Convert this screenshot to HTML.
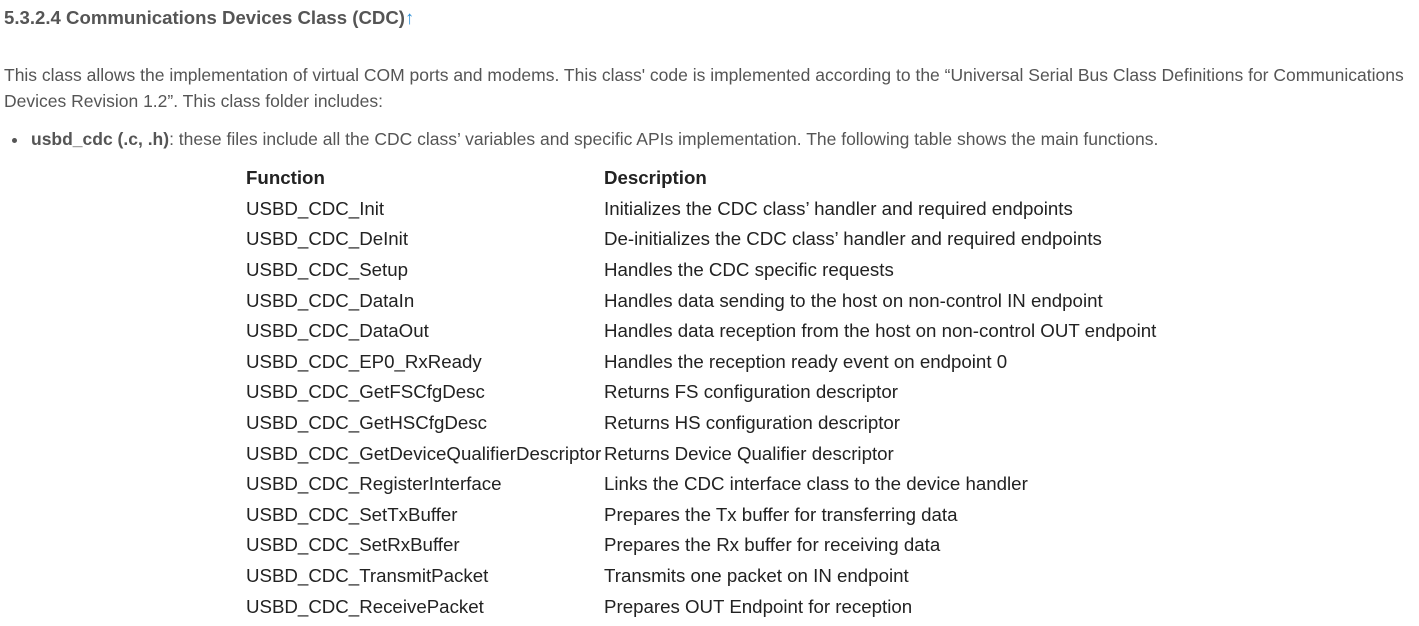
<!DOCTYPE html>
<html><head><style>
body{margin:0;background:#fff;font-family:"Liberation Sans",sans-serif;color:#555;}
h4{position:absolute;left:4px;top:7px;margin:0;font-size:18.6px;font-weight:bold;color:#555;}
h4 span{color:#2d8fd5;font-weight:bold}
.p{position:absolute;left:4px;top:62px;width:1405px;font-size:17.5px;line-height:26px;margin:0}
.li{position:absolute;left:31px;top:128px;font-size:17.5px;line-height:22px}
.li:before{content:"";position:absolute;left:-19px;top:10px;width:5px;height:5px;border-radius:50%;background:#555}
.li b{color:#555}
table{position:absolute;left:244px;top:163px;border-collapse:collapse;font-size:18.7px;color:#222}
td,th{padding:0 2px;height:30.6px;text-align:left;white-space:nowrap;vertical-align:middle}
th{font-weight:bold}
td:first-child,th:first-child{width:356px;padding-right:0}
</style></head><body>
<h4>5.3.2.4 Communications Devices Class (CDC)<span>↑</span></h4>
<p class="p">This class allows the implementation of virtual COM ports and modems. This class' code is implemented according to the “Universal Serial Bus Class Definitions for Communications Devices Revision 1.2”. This class folder includes:</p>
<div class="li"><b>usbd_cdc (.c, .h)</b>: these files include all the CDC class’ variables and specific APIs implementation. The following table shows the main functions.</div>
<table>
<tr><th>Function</th><th>Description</th></tr>
<tr><td>USBD_CDC_Init</td><td>Initializes the CDC class’ handler and required endpoints</td></tr>
<tr><td>USBD_CDC_DeInit</td><td>De-initializes the CDC class’ handler and required endpoints</td></tr>
<tr><td>USBD_CDC_Setup</td><td>Handles the CDC specific requests</td></tr>
<tr><td>USBD_CDC_DataIn</td><td>Handles data sending to the host on non-control IN endpoint</td></tr>
<tr><td>USBD_CDC_DataOut</td><td>Handles data reception from the host on non-control OUT endpoint</td></tr>
<tr><td>USBD_CDC_EP0_RxReady</td><td>Handles the reception ready event on endpoint 0</td></tr>
<tr><td>USBD_CDC_GetFSCfgDesc</td><td>Returns FS configuration descriptor</td></tr>
<tr><td>USBD_CDC_GetHSCfgDesc</td><td>Returns HS configuration descriptor</td></tr>
<tr><td>USBD_CDC_GetDeviceQualifierDescriptor</td><td>Returns Device Qualifier descriptor</td></tr>
<tr><td>USBD_CDC_RegisterInterface</td><td>Links the CDC interface class to the device handler</td></tr>
<tr><td>USBD_CDC_SetTxBuffer</td><td>Prepares the Tx buffer for transferring data</td></tr>
<tr><td>USBD_CDC_SetRxBuffer</td><td>Prepares the Rx buffer for receiving data</td></tr>
<tr><td>USBD_CDC_TransmitPacket</td><td>Transmits one packet on IN endpoint</td></tr>
<tr><td>USBD_CDC_ReceivePacket</td><td>Prepares OUT Endpoint for reception</td></tr>
</table>
</body></html>
